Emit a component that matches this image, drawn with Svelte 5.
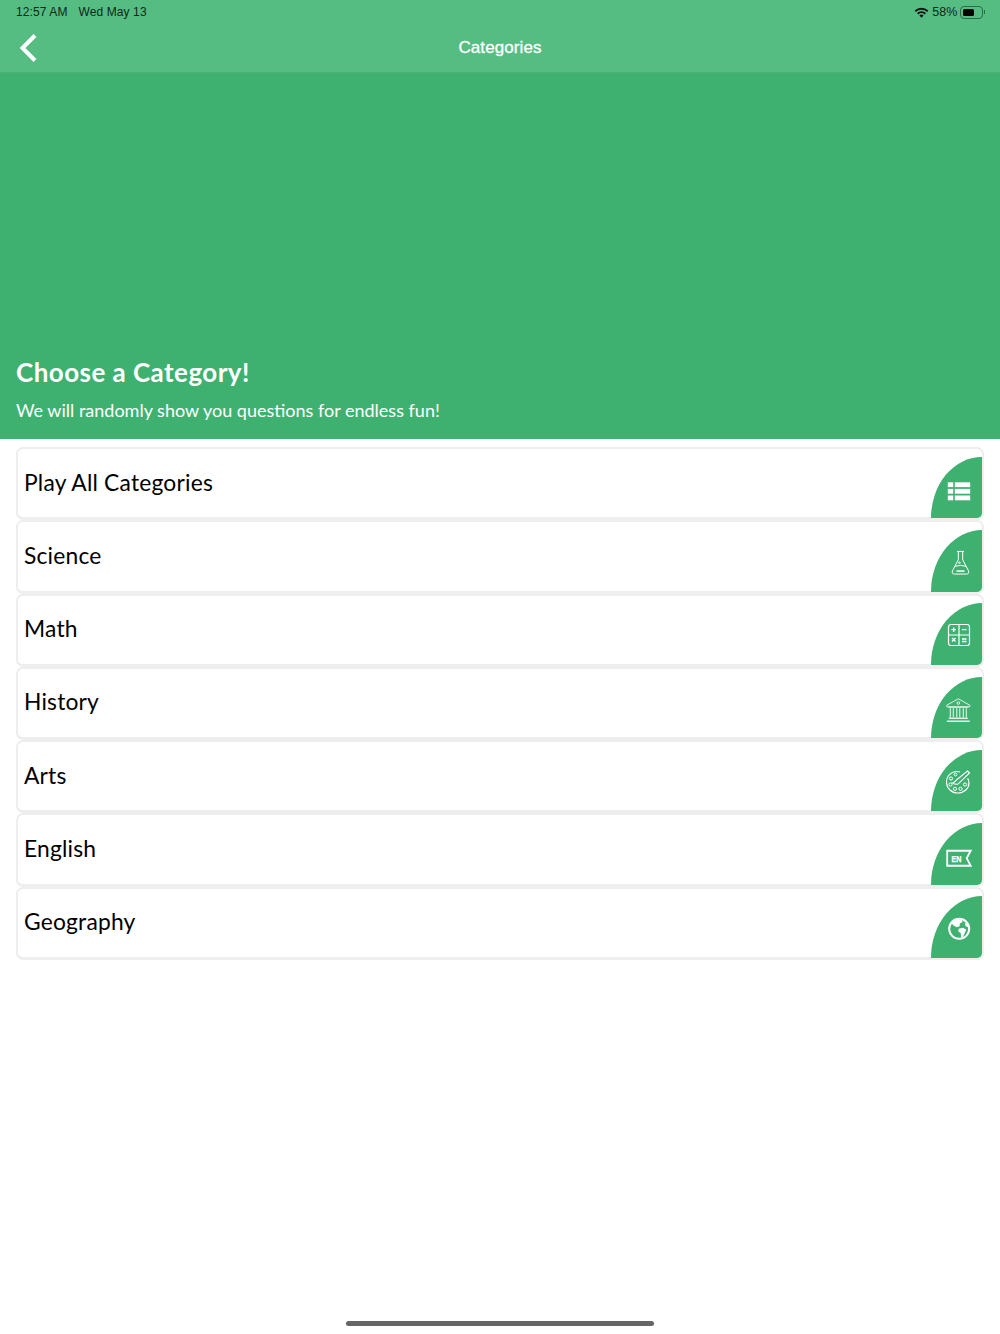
<script>
  const categories = [
    { name: 'Play All Categories', icon: 'list' },
    { name: 'Science', icon: 'flask' },
    { name: 'Math', icon: 'calc' },
    { name: 'History', icon: 'bank' },
    { name: 'Arts', icon: 'palette' },
    { name: 'English', icon: 'en' },
    { name: 'Geography', icon: 'globe' }
  ];
</script>

<div class="page">
  <header class="top">
    <div class="status">
      <span class="time">12:57 AM</span>
      <span class="date">Wed May 13</span>
      <span class="spacer"></span>
      <svg class="wifi" width="15" height="11" viewBox="0 0 15 11">
        <path d="M0.6 3.6 A10 10 0 0 1 14.4 3.6 L13.1 5 A8 8 0 0 0 1.9 5 Z" fill="#111" />
        <path d="M3 6 A6.6 6.6 0 0 1 12 6 L10.7 7.4 A4.7 4.7 0 0 0 4.3 7.4 Z" fill="#111" />
        <path d="M5.4 8.4 A3.2 3.2 0 0 1 9.6 8.4 L7.5 10.7 Z" fill="#111" />
      </svg>
      <span class="pct">58%</span>
      <span class="battery"><span class="level"></span></span>
      <span class="nub"></span>
    </div>
    <nav class="bar">
      <svg class="back" width="20" height="30" viewBox="0 0 20 30">
        <path d="M17 2.5 L4.5 15 L17 27.5" fill="none" stroke="#fff" stroke-width="4" />
      </svg>
      <h1>Categories</h1>
    </nav>
  </header>

  <section class="hero">
    <h2>Choose a Category!</h2>
    <p>We will randomly show you questions for endless fun!</p>
  </section>

  <ul class="list">
    {#each categories as cat}
      <li class="row">
        <span class="name">{cat.name}</span>
        <span class="badge">
          <svg width="26" height="26" viewBox="0 0 26 26" fill="none" stroke="#fff" stroke-width="1">
            {#if cat.icon === 'list'}
              <g fill="#fff" stroke="none" transform="translate(0 2.3)">
                <rect x="1.8" y="4" width="5.4" height="4.8" />
                <rect x="8.8" y="4" width="15.4" height="4.8" />
                <rect x="1.8" y="10.6" width="5.4" height="4.8" />
                <rect x="8.8" y="10.6" width="15.4" height="4.8" />
                <rect x="1.8" y="17.2" width="5.4" height="4.8" />
                <rect x="8.8" y="17.2" width="15.4" height="4.8" />
              </g>
            {:else if cat.icon === 'flask'}
              <g transform="translate(1.5 0.75)">
                <path d="M9.5 1.7 H16.5 M10.8 1.7 V10 L5 21 Q3.9 24.3 7 24.3 H19 Q22.1 24.3 21 21 L15.2 10 V1.7" />
                <path d="M7.5 16.5 Q13 14.8 18.5 16.5" />
                <path d="M9 21.3 H17" stroke-width="1.5" />
                <circle cx="12" cy="13" r="0.8" />
              </g>
            {:else if cat.icon === 'calc'}
              <rect x="2.5" y="2.5" width="21" height="21" rx="2.5" stroke-width="1.2" />
              <path d="M13 2.5 V23.5 M2.5 13 H23.5" stroke-width="1.2" />
              <path d="M5.5 7.7 H10 M7.7 5.5 V10 M16 7.7 H20.5 M16 17 H20.5 M16 19.5 H20.5 M6 16 L9.5 19.5 M9.5 16 L6 19.5" stroke-width="1.3" />
            {:else if cat.icon === 'bank'}
              <g transform="translate(-0.7 1.25)" opacity="0.85">
                <path d="M13 1.5 L24.5 8 V9.5 H1.5 V8 Z" />
                <circle cx="13" cy="5.8" r="1.3" />
                <path d="M3 10 H23 M5 11 V20 M8 11 V20 M11.5 11 V20 M14.5 11 V20 M18 11 V20 M21 11 V20" stroke-width="1.1" />
                <path d="M3.5 21 H22.5 M1.5 24 H24.5" stroke-width="1.6" />
              </g>
            {:else if cat.icon === 'palette'}
              <g transform="translate(-1 -0.5)">
                <path d="M15 3.5 C8 1.5 1.5 6.5 1.5 13.5 C1.5 20 7 24.5 13 24.5 C19 24.5 24 20 24 14.5 C24 12.5 23.4 11 22.6 9.8" stroke-width="1.2" />
                <path d="M7.5 14.5 C10 14 10.5 12 12 11 L22.5 2.5 L24.5 4.5 L15 13.5 C14 15.5 11.5 17 7.5 14.5 Z" stroke-width="1.1" />
                <circle cx="6" cy="10" r="1.6" />
                <circle cx="5.5" cy="16" r="1.6" />
                <circle cx="10" cy="20.3" r="1.6" />
                <circle cx="15.5" cy="20.3" r="1.6" />
                <circle cx="20" cy="16" r="1.6" />
                <circle cx="10.5" cy="6" r="1.4" />
              </g>
            {:else if cat.icon === 'en'}
              <g transform="translate(-0.3 3.25)">
                <path d="M25 5.5 H1.5 V20.5 H25 L21 13 Z" stroke-width="1.8" />
                <text x="10.7" y="16.4" text-anchor="middle" textLength="10" lengthAdjust="spacingAndGlyphs" class="en" fill="#fff" stroke="#fff" stroke-width="0.25">EN</text>
              </g>
            {:else}
              <g transform="translate(0.2 0.8)">
                <circle cx="13" cy="13" r="10" stroke-width="2" />
                <g fill="#fff" stroke="none">
                  <path d="M9 4.5 L15 3.5 L16.5 6 L13.5 8 L13.5 10.5 L10.5 11.5 L7 9.5 L5.5 7.5 Z" />
                  <path d="M12.5 13 L17 12 L20 14 L18.5 17.5 L16.5 21.5 L15 21.5 L14.5 17.5 L12 15.5 Z" />
                  <path d="M18.5 7 L21.5 9 L22 11.5 L19.5 10.5 Z" />
                </g>
              </g>
            {/if}
          </svg>
        </span>
      </li>
    {/each}
  </ul>

  <div class="home"></div>
</div>

<style>
  :global(body) {
    margin: 0;
    background: #fff;
  }
  .page {
    position: relative;
    height: 1334px;
    overflow: hidden;
    background: #fff;
    font-family: Lato, "Open Sans", sans-serif;
  }
  .top {
    height: 73px;
    box-sizing: border-box;
    background: #55bd82;
    border-bottom: 1px solid #4cae78;
    font-family: "Liberation Sans", Arial, sans-serif;
  }
  .status {
    height: 24px;
    display: flex;
    align-items: center;
    padding: 0 15px 0 16px;
    font-size: 12px;
    letter-spacing: 0.1px;
    color: #10261a;
  }
  .date {
    margin-left: 11px;
  }
  .spacer {
    flex: 1;
  }
  .pct {
    margin-left: 3px;
    font-size: 12.5px;
  }
  .battery {
    width: 23px;
    height: 13px;
    box-sizing: border-box;
    margin-left: 2px;
    padding: 2px;
    border: 1px solid #2c6b47;
    border-radius: 4px;
  }
  .level {
    display: block;
    width: 11px;
    height: 100%;
    background: #000;
    border-radius: 1.5px;
  }
  .nub {
    width: 1.5px;
    height: 4px;
    margin-left: 1px;
    background: #2c6b47;
  }
  .bar {
    height: 48px;
    display: flex;
    align-items: center;
    justify-content: center;
    position: relative;
  }
  .back {
    position: absolute;
    left: 18px;
    top: 9px;
  }
  h1 {
    margin: 0;
    font-size: 17px;
    font-weight: 400;
    letter-spacing: 0.1px;
    color: #fff;
    -webkit-text-stroke: 0.3px #fff;
  }
  .hero {
    height: 366px;
    box-sizing: border-box;
    background: #3eb170;
    color: #fff;
    display: flex;
    flex-direction: column;
    justify-content: flex-end;
    padding: 0 16px 18px;
  }
  h2 {
    margin: 0 0 11px;
    font-size: 26px;
    line-height: 32px;
    font-weight: 700;
    letter-spacing: 0.45px;
  }
  .hero p {
    margin: 0;
    font-size: 18px;
    line-height: 22px;
  }
  .list {
    list-style: none;
    margin: 0;
    padding: 8px 16px 0;
  }
  .row {
    height: 73.25px;
    box-sizing: border-box;
    display: flex;
    justify-content: space-between;
    background: #fff;
    border: 2px solid #eee;
    border-bottom-width: 3px;
    border-radius: 7px;
    padding-left: 6px;
  }
  .name {
    align-self: center;
    padding-bottom: 3px;
    font-size: 22.8px;
    color: #000;
    letter-spacing: 0.2px;
  }
  .badge {
    align-self: flex-end;
    width: 51px;
    height: 61.5px;
    box-sizing: border-box;
    margin-bottom: -1px;
    padding: 19px 0 0 15px;
    background: #3eb170;
    border-radius: 51px 0 5px 0 / 61.5px 0 5px 0;
  }
  .badge svg {
    display: block;
    overflow: visible;
  }
  .en {
    font-family: "Liberation Sans", sans-serif;
    font-size: 8.5px;
    font-weight: 700;
  }
  .home {
    position: absolute;
    left: 346px;
    bottom: 8px;
    width: 308px;
    height: 5px;
    border-radius: 3px;
    background: #666;
  }
</style>
